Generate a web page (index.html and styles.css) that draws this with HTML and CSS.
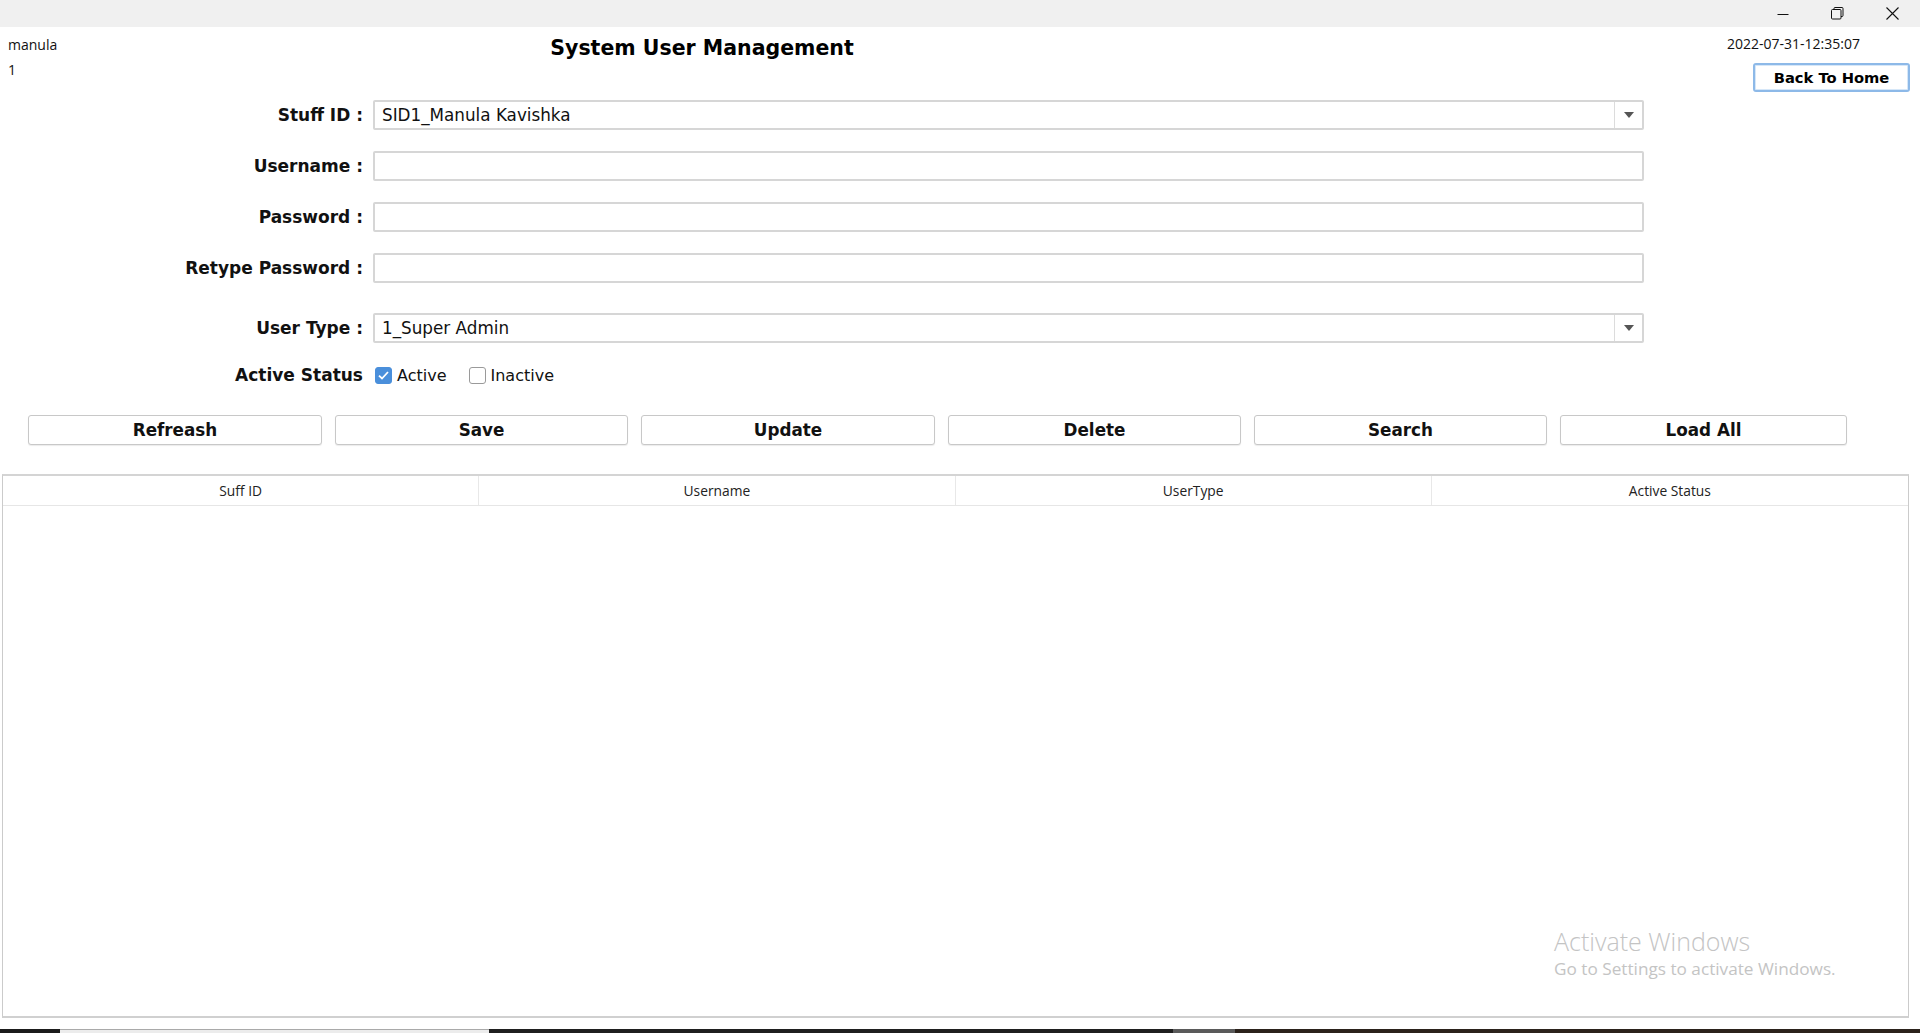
FILE: index.html
```html
<!DOCTYPE html>
<html lang="en">
<head>
<meta charset="utf-8">
<title>System User Management</title>
<link rel="stylesheet" href="styles.css">
</head>
<body>
<div class="titlebar">
  <div class="winbtn"><svg width="12" height="12" viewBox="0 0 12 12"><line x1="0.5" y1="6.5" x2="11.5" y2="6.5" stroke="#111" stroke-width="1"/></svg></div>
  <div class="winbtn"><svg width="13" height="13" viewBox="0 0 13 13" fill="none" stroke="#111" stroke-width="1"><rect x="0.5" y="2.5" width="9.5" height="9.5" rx="1"/><path d="M3 2.5 V1.5 Q3 0.5 4 0.5 H11 Q12 0.5 12 1.5 V8.5 Q12 9.5 11 9.5 H10"/></svg></div>
  <div class="winbtn"><svg width="13" height="13" viewBox="0 0 13 13"><path d="M0.5 0.5 L12.5 12.5 M12.5 0.5 L0.5 12.5" stroke="#111" stroke-width="1.1"/></svg></div>
</div>

<header class="header">
  <div class="user-info">
    <div>manula</div>
    <div>1</div>
  </div>
  <h1 class="page-title">System User Management</h1>
  <div class="header-right">
    <div class="datetime">2022-07-31-12:35:07</div>
    <button class="home-btn">Back To Home</button>
  </div>
</header>

<section class="form">
  <div class="field">
    <label class="label">Stuff ID :</label>
    <div class="input select"><span class="select-value">SID1_Manula Kavishka</span><span class="select-arrow"><span class="tri"></span></span></div>
  </div>
  <div class="field">
    <label class="label">Username :</label>
    <div class="input"></div>
  </div>
  <div class="field">
    <label class="label">Password :</label>
    <div class="input"></div>
  </div>
  <div class="field">
    <label class="label">Retype Password :</label>
    <div class="input"></div>
  </div>
  <div class="field field-spaced">
    <label class="label">User Type :</label>
    <div class="input select"><span class="select-value">1_Super Admin</span><span class="select-arrow"><span class="tri"></span></span></div>
  </div>
  <div class="field status-row">
    <label class="label">Active Status</label>
    <div class="checks">
      <span class="check checked"><svg width="11" height="9" viewBox="0 0 11 9"><path d="M1 4.6 L4 7.5 L10 1" fill="none" stroke="#fff" stroke-width="1.8"/></svg></span>
      <span class="check-text">Active</span>
      <span class="check check-gap"></span>
      <span class="check-text">Inactive</span>
    </div>
  </div>
</section>

<div class="actions">
  <button class="btn w294">Refreash</button>
  <button class="btn w293">Save</button>
  <button class="btn w294">Update</button>
  <button class="btn w293">Delete</button>
  <button class="btn w293">Search</button>
  <button class="btn w287">Load All</button>
</div>

<div class="table">
  <div class="thead">
    <div class="th">Suff ID</div>
    <div class="th">Username</div>
    <div class="th">UserType</div>
    <div class="th last">Active Status</div>
  </div>
</div>

<div class="taskbar">
  <span class="tb tb-a"></span><span class="tb tb-b"></span><span class="tb tb-c"></span><span class="tb tb-d"></span><span class="tb tb-e"></span>
</div>

<div class="watermark">
  <div class="wm-title">Activate Windows</div>
  <div class="wm-sub">Go to Settings to activate Windows.</div>
</div>
</body>
</html>
```

FILE: styles.css
```css
* { box-sizing: border-box; }

body {
  margin: 0;
  width: 1920px;
  height: 1033px;
  overflow: hidden;
  background: #fff;
  color: #111;
  font-family: "Open Sans", "Noto Sans", sans-serif;
}

.titlebar {
  height: 27px;
  background: #f0f0f0;
  display: flex;
  justify-content: flex-end;
}
.winbtn {
  width: 55px;
  height: 27px;
  display: flex;
  align-items: center;
  justify-content: center;
}

.header {
  display: grid;
  grid-template-columns: 200px 1004px 1fr;
  height: 73px;
}
.user-info {
  padding: 5px 0 0 8px;
  font-size: 14px;
  line-height: 25px;
  color: #111;
}
.page-title {
  margin: 0;
  padding-top: 6px;
  text-align: center;
  font-family: "DejaVu Sans", Verdana, sans-serif;
  font-weight: bold;
  font-size: 20.5px;
  line-height: 30px;
  color: #000;
}
.header-right {
  display: flex;
  flex-direction: column;
  align-items: flex-end;
  padding: 7px 10px 0 0;
}
.datetime {
  font-size: 14px;
  line-height: 20px;
  margin-right: 50px;
  color: #111;
}
.home-btn {
  margin-top: 9px;
  width: 157px;
  height: 29px;
  border: 2px solid #8db9e8;
  border-radius: 3px;
  background: #fff;
  box-shadow: inset 0 0 0 1px #d6e7f8;
  font-family: "DejaVu Sans", Verdana, sans-serif;
  font-weight: bold;
  font-size: 14.7px;
  color: #000;
  padding: 0;
}

.field {
  display: grid;
  grid-template-columns: 363px 1271px;
  column-gap: 10px;
  align-items: center;
  height: 30px;
}
.field + .field { margin-top: 21px; }
.field.field-spaced { margin-top: 30px; }
.field.status-row { margin-top: 22px; height: 20px; }

.label {
  text-align: right;
  white-space: nowrap;
  font-family: "DejaVu Sans", Verdana, sans-serif;
  font-weight: bold;
  font-size: 17px;
  color: #111;
}
.input {
  height: 30px;
  border: 2px solid #d6d6d6;
  border-radius: 2px;
  background: #fff;
  display: flex;
  align-items: center;
  padding-left: 7px;
  font-family: "DejaVu Sans", Verdana, sans-serif;
  font-size: 16.8px;
  color: #111;
}
.select-value { flex: 1; }
.select-arrow {
  width: 28px;
  height: 100%;
  border-left: 1px solid #dcdcdc;
  display: flex;
  align-items: center;
  justify-content: center;
}
.tri {
  width: 0;
  height: 0;
  border-left: 5px solid transparent;
  border-right: 5px solid transparent;
  border-top: 6px solid #555;
}

.checks {
  display: flex;
  align-items: center;
  padding-left: 2px;
  font-family: "DejaVu Sans", Verdana, sans-serif;
  font-size: 16px;
  color: #111;
}
.check {
  width: 17px;
  height: 17px;
  border: 1px solid #9a9a9a;
  border-radius: 3px;
  background: #fff;
  display: flex;
  align-items: center;
  justify-content: center;
}
.check.checked {
  background: #4a8fdb;
  border-color: #4a8fdb;
}
.check-text { margin-left: 5px; }
.check-gap { margin-left: 22px; }

.actions {
  display: flex;
  gap: 13px;
  padding-left: 28px;
  margin-top: 30px;
}
.btn {
  height: 30px;
  background: #fff;
  border: 1px solid #c8c8c8;
  border-radius: 3px;
  box-shadow: 0 1px 1px rgba(0, 0, 0, 0.08);
  font-family: "DejaVu Sans", Verdana, sans-serif;
  font-weight: bold;
  font-size: 16.8px;
  color: #111;
  padding: 0;
}
.w294 { width: 294px; }
.w293 { width: 293px; }
.w287 { width: 287px; }

.table {
  margin: 29px 0 0 2px;
  width: 1907px;
  height: 544px;
  border: 1px solid #cbcbcb;
  border-top: 2px solid #d4d4d4;
  border-bottom: 2px solid #d0d0d0;
  background: #fff;
}
.thead {
  display: grid;
  grid-template-columns: repeat(4, 1fr);
  height: 30px;
  border-bottom: 1px solid #e6e6e6;
}
.th {
  border-right: 1px solid #e8e8e8;
  display: flex;
  align-items: center;
  justify-content: center;
  font-size: 13.8px;
  color: #222;
}
.th.last { border-right: none; }

.taskbar {
  margin-top: 11px;
  height: 4px;
  display: flex;
}
.tb { height: 4px; }
.tb-a { width: 60px; background: #1b1b1b; }
.tb-b { width: 429px; background: #ececec; border-top: 1px solid #a9a9a9; }
.tb-c { width: 684px; background: #1f1f1f; }
.tb-d { width: 62px; background: #5a5a5a; }
.tb-e { flex: 1; background: #2b221b; }

.watermark {
  position: absolute;
  left: 1554px;
  top: 925px;
  color: #c4c4c4;
}
.wm-title {
  font-size: 25px;
  font-weight: 300;
  line-height: 32px;
}
.wm-sub {
  font-size: 17.2px;
  line-height: 24px;
}
```
